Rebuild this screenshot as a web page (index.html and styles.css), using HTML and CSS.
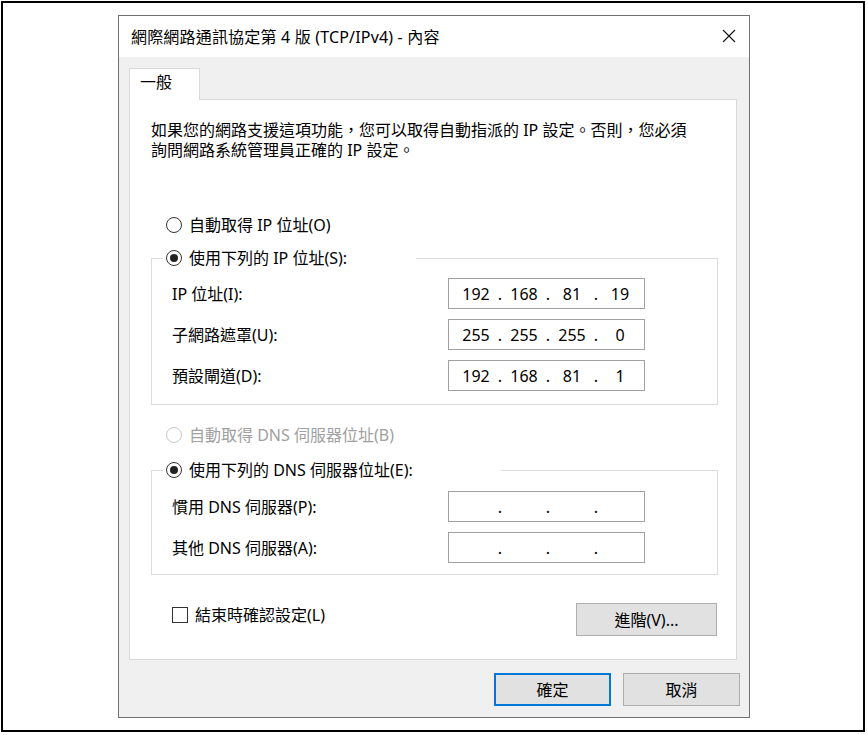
FILE: index.html
```html
<!DOCTYPE html>
<html lang="zh-Hant">
<head>
<meta charset="utf-8">
<title>網際網路通訊協定第 4 版 (TCP/IPv4) - 內容</title>
<link rel="stylesheet" href="styles.css">
</head>
<body>
<div class="frame">
  <div class="dialog">
    <div class="titlebar">
      <span class="title">網際網路通訊協定第 4 版 (TCP/IPv4) - 內容</span>
      <span class="close"><svg width="14" height="14" viewBox="0 0 14 14"><path d="M1 1L13 13M13 1L1 13" stroke="#111" stroke-width="1.1" fill="none"/></svg></span>
    </div>
    <div class="body">
      <div class="tabs"><div class="tab">一般</div></div>
      <div class="panel">
        <p class="intro">如果您的網路支援這項功能，您可以取得自動指派的 IP 設定。否則，您必須<br>詢問網路系統管理員正確的 IP 設定。</p>

        <div class="radio r-first"><span class="rb"></span><span>自動取得 IP 位址(O)</span></div>

        <fieldset class="group g-ip">
          <legend class="legend legend-ip checked"><span class="rb"></span><span>使用下列的 IP 位址(S):</span></legend>
          <div class="row"><span class="lbl">IP 位址(I):</span>
            <div class="ipbox"><span class="seg">192</span><span class="dot">.</span><span class="seg">168</span><span class="dot">.</span><span class="seg">81</span><span class="dot">.</span><span class="seg">19</span></div>
          </div>
          <div class="row"><span class="lbl">子網路遮罩(U):</span>
            <div class="ipbox"><span class="seg">255</span><span class="dot">.</span><span class="seg">255</span><span class="dot">.</span><span class="seg">255</span><span class="dot">.</span><span class="seg">0</span></div>
          </div>
          <div class="row"><span class="lbl">預設閘道(D):</span>
            <div class="ipbox"><span class="seg">192</span><span class="dot">.</span><span class="seg">168</span><span class="dot">.</span><span class="seg">81</span><span class="dot">.</span><span class="seg">1</span></div>
          </div>
        </fieldset>

        <div class="radio r-dns disabled"><span class="rb"></span><span>自動取得 DNS 伺服器位址(B)</span></div>

        <fieldset class="group g-dns">
          <legend class="legend legend-dns checked"><span class="rb"></span><span>使用下列的 DNS 伺服器位址(E):</span></legend>
          <div class="row"><span class="lbl">慣用 DNS 伺服器(P):</span>
            <div class="ipbox"><span class="seg"></span><span class="dot">.</span><span class="seg"></span><span class="dot">.</span><span class="seg"></span><span class="dot">.</span><span class="seg"></span></div>
          </div>
          <div class="row"><span class="lbl">其他 DNS 伺服器(A):</span>
            <div class="ipbox"><span class="seg"></span><span class="dot">.</span><span class="seg"></span><span class="dot">.</span><span class="seg"></span><span class="dot">.</span><span class="seg"></span></div>
          </div>
        </fieldset>

        <div class="bottom">
          <label class="check"><span class="cb"></span><span>結束時確認設定(L)</span></label>
          <button class="btn btn-adv" type="button">進階(V)...</button>
        </div>
      </div>
      <div class="actions">
        <button class="btn btn-ok" type="button">確定</button>
        <button class="btn btn-cancel" type="button">取消</button>
      </div>
    </div>
  </div>
</div>
</body>
</html>
```

FILE: styles.css
```css
* { box-sizing: border-box; }

body {
  margin: 0;
  background: #fff;
  font-family: "Noto Sans", "Noto Sans CJK TC", sans-serif;
  font-size: 16px;
  color: #000;
}

.frame {
  margin: 1px 0 0 1px;
  width: 864px;
  height: 731px;
  border: 2px solid #000;
  padding: 12px 0 0 115px;
}

.dialog {
  width: 632px;
  height: 703px;
  border: 1px solid #707070;
  background: #f0f0f0;
  display: flex;
  flex-direction: column;
}

.titlebar {
  height: 41px;
  flex: none;
  background: #fff;
  display: flex;
  align-items: center;
  justify-content: space-between;
  padding: 0 13px 0 12px;
}

.title { line-height: 20px; white-space: nowrap; margin-top: 1px; letter-spacing: 0.18px; }

.close { display: flex; width: 14px; height: 14px; margin-top: -2px; }

.body {
  flex: 1;
  padding: 11px 9px 0 10px;
}

.tabs { display: flex; }

.tab {
  width: 71px;
  height: 32px;
  border: 1px solid #d9d9d9;
  border-bottom: none;
  background: #fff;
  padding-left: 10px;
  line-height: 26px;
  margin-bottom: -1px;
  position: relative;
  z-index: 1;
}

.panel {
  width: 608px;
  height: 561px;
  border: 1px solid #d9d9d9;
  background: #fff;
  padding: 20px 0 0 21px;
}

.intro {
  margin: 0;
  line-height: 20px;
  white-space: nowrap;
}

.radio {
  display: flex;
  align-items: center;
  gap: 7px;
  height: 20px;
  line-height: 20px;
  margin-left: 15px;
  white-space: nowrap;
}

.r-first { margin-top: 55px; }
.r-dns { margin-top: 20px; }

.rb {
  flex: none;
  width: 16px;
  height: 16px;
  border: 1px solid #333;
  border-radius: 50%;
  display: flex;
  align-items: center;
  justify-content: center;
  background: #fff;
}

.checked .rb::after {
  content: "";
  width: 8px;
  height: 8px;
  border-radius: 50%;
  background: #222;
}

.disabled { color: #a0a0a0; }
.disabled .rb { border-color: #c8c8c8; }

.group {
  margin: 13px 0 0 0;
  width: 567px;
  min-width: 0;
  border: 1px solid #dcdcdc;
  padding: 10px 0 13px 0;
}

.g-dns {
  margin-top: 15px;
  padding: 11px 0 11px 0;
}

.legend {
  display: flex;
  align-items: center;
  gap: 7px;
  height: 20px;
  line-height: 20px;
  margin-left: 11px;
  padding: 0 0 0 3px;
  white-space: nowrap;
}

.legend-ip { width: 253px; }
.legend-dns { width: 338px; }

.row {
  display: flex;
  align-items: center;
  height: 31px;
  padding-left: 20px;
}

.row + .row { margin-top: 10px; }

.lbl { width: 276px; flex: none; white-space: nowrap; line-height: 20px; }

.ipbox {
  width: 197px;
  height: 31px;
  border: 1px solid #a0a0a0;
  display: flex;
  align-items: center;
  padding-left: 7px;
  line-height: 20px;
}

.seg { width: 40px; text-align: center; flex: none; }
.dot { width: 8px; text-align: center; flex: none; }

.bottom {
  margin-top: 28px;
  width: 566px;
  display: flex;
  justify-content: space-between;
  align-items: flex-start;
}

.check {
  display: flex;
  align-items: center;
  gap: 7px;
  height: 20px;
  line-height: 20px;
  margin: 2px 0 0 21px;
  white-space: nowrap;
}

.cb {
  flex: none;
  width: 16px;
  height: 16px;
  border: 1px solid #333;
  background: #fff;
}

.btn {
  font-family: inherit;
  font-size: 16px;
  color: #000;
  background: #e1e1e1;
  border: 1px solid #adadad;
  height: 33px;
  padding: 0;
  line-height: 20px;
}

.btn-adv { width: 141px; }

.actions {
  display: flex;
  justify-content: flex-end;
  gap: 12px;
  margin-top: 13px;
}

.btn-ok { width: 117px; border: 2px solid #0078d7; }
.btn-cancel { width: 117px; }
```
